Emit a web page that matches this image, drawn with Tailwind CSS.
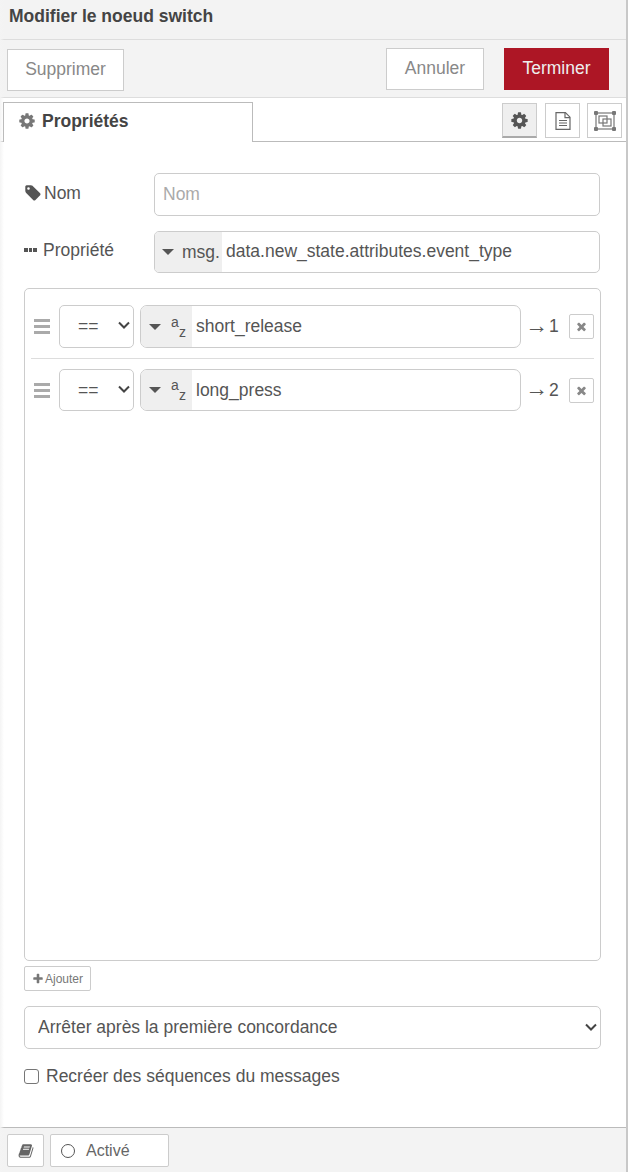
<!DOCTYPE html>
<html lang="fr">
<head>
  <meta charset="UTF-8" />
  <title>Modifier le noeud switch</title>
  <script src="https://cdn.jsdelivr.net/npm/@tailwindcss/browser@4"></script>
</head>
<body class="bg-white">
  <div class="relative h-[1172px] w-[628px] flex flex-col border-r-2 border-[#c8c8c8] font-['Liberation_Sans',Arial,sans-serif] text-[17.5px] text-[#555] overflow-hidden">
    <!-- left edge shadow -->
    <div class="absolute left-0 top-0 bottom-0 w-[4px] bg-gradient-to-r from-[#f4f4f4] to-transparent"></div>

    <!-- Title -->
    <header class="h-[40px] shrink-0 bg-[#f3f3f3] border-b border-[#ddd] pl-[9px] pt-[6px] font-bold text-[17.5px] leading-[20px] text-[#444]">Modifier le noeud switch</header>

    <!-- Actions -->
    <div class="h-[58px] shrink-0 bg-[#f3f3f3] border-b border-[#ddd] flex items-start justify-between pl-[7px] pr-[17px] pt-[8px]">
      <button class="mt-px h-[42px] w-[117px] pb-[2px] bg-white border border-[#ccc] text-[#888]">Supprimer</button>
      <div class="flex gap-[20px]">
        <button class="h-[42px] w-[98px] pb-[2px] bg-white border border-[#ccc] text-[#888]">Annuler</button>
        <button class="h-[42px] w-[105px] pb-[2px] bg-[#ad1625] text-[#eee]">Terminer</button>
      </div>
    </div>

    <!-- Tabs -->
    <div class="h-[44px] shrink-0 border-b border-[#bbb] flex items-end justify-between pl-[3px] pr-[4px]">
      <div class="-mb-px relative h-[40px] w-[250px] bg-white border-x border-t border-[#bbb] flex items-center pl-[14px] pb-[3px] gap-[6px] font-bold text-[#444]">
        <svg class="w-[18px] h-[18px] text-[#777]" viewBox="0 0 1792 1792" fill="currentColor"><path fill-rule="evenodd" d="M1152 896q0-106-75-181t-181-75-181 75-75 181 75 181 181 75 181-75 75-181zm512-109v222q0 12-8 23t-20 13l-185 28q-19 54-39 91 35 50 107 138 10 12 10 25t-9 23q-27 37-99 108t-94 71q-12 0-26-9l-138-108q-44 23-91 38-16 136-29 186-7 28-36 28h-222q-14 0-24.500-8.500t-11.500-21.500l-28-184q-49-16-90-37l-141 107q-10 9-25 9-14 0-25-11-126-114-165-168-7-10-7-23 0-12 8-23 15-21 51-66.500t54-70.500q-27-50-41-99l-183-27q-13-2-21-12.500t-8-23.500v-222q0-12 8-23t19-13l186-28q14-46 39-92-40-57-107-138-10-12-10-24 0-10 9-23 26-36 98.500-107.500t94.500-71.500q13 0 26 10l138 107q44-23 91-38 16-136 29-186 7-28 36-28h222q14 0 24.500 8.500t11.500 21.500l28 184q49 16 90 37l142-107q9-9 24-9 13 0 25 10 129 119 165 170 7 8 7 22 0 12-8 23-15 21-51 66.500t-54 70.500q26 50 41 98l183 28q13 2 21 12.500t8 23.500z"/></svg>
        Propriétés
      </div>
      <div class="flex mb-[3px]">
        <button class="w-[35px] h-[35px] bg-[#efefef] border border-[#ccc] border-b-2 border-b-[#aaa] flex items-center justify-center text-[#555]">
          <svg class="w-[19px] h-[19px]" viewBox="0 0 1792 1792" fill="currentColor"><path fill-rule="evenodd" d="M1152 896q0-106-75-181t-181-75-181 75-75 181 75 181 181 75 181-75 75-181zm512-109v222q0 12-8 23t-20 13l-185 28q-19 54-39 91 35 50 107 138 10 12 10 25t-9 23q-27 37-99 108t-94 71q-12 0-26-9l-138-108q-44 23-91 38-16 136-29 186-7 28-36 28h-222q-14 0-24.500-8.500t-11.500-21.500l-28-184q-49-16-90-37l-141 107q-10 9-25 9-14 0-25-11-126-114-165-168-7-10-7-23 0-12 8-23 15-21 51-66.500t54-70.500q-27-50-41-99l-183-27q-13-2-21-12.500t-8-23.500v-222q0-12 8-23t19-13l186-28q14-46 39-92-40-57-107-138-10-12-10-24 0-10 9-23 26-36 98.500-107.500t94.500-71.500q13 0 26 10l138 107q44-23 91-38 16-136 29-186 7-28 36-28h222q14 0 24.500 8.500t11.500 21.500l28 184q49 16 90 37l142-107q9-9 24-9 13 0 25 10 129 119 165 170 7 8 7 22 0 12-8 23-15 21-51 66.500t-54 70.500q26 50 41 98l183 28q13 2 21 12.500t8 23.500z"/></svg>
        </button>
        <button class="ml-[8px] w-[35px] h-[35px] bg-white border border-[#ccc] flex items-center justify-center text-[#666]">
          <svg class="w-[16px] h-[18px]" viewBox="0 0 16 18" fill="none" stroke="currentColor" stroke-width="1.2"><path d="M1 .6h9.400l4.600 4.600v12.200h-14z"/><path d="M10 .6v5h5" /><path d="M4 8.500h8M4 11h8M4 13.500h8" /></svg>
        </button>
        <button class="ml-[7px] w-[35px] h-[35px] bg-white border border-[#ccc] flex items-center justify-center text-[#777]">
          <svg class="w-[22px] h-[20px]" viewBox="0 0 22 20" fill="none" stroke="currentColor" stroke-width="1.200"><rect x="2" y="2" width="18" height="16"/><rect x="5" y="5" width="8" height="7"/><rect x="9" y="8" width="8" height="7"/><g fill="currentColor" stroke="none"><rect x="0" y="0" width="4" height="4" rx="1"/><rect x="18" y="0" width="4" height="4" rx="1"/><rect x="0" y="16" width="4" height="4" rx="1"/><rect x="18" y="16" width="4" height="4" rx="1"/></g></svg>
        </button>
      </div>
    </div>

    <!-- Form -->
    <main class="flex-1 pl-[24px] pr-[26px] pt-[31px] bg-white">
      <div class="flex items-start h-[43px]">
        <label class="w-[130px] flex items-center gap-[2px] pt-[10px] leading-[20px]">
          <svg class="w-[18px] h-[18px]" viewBox="0 0 1792 1792" fill="currentColor"><path fill-rule="evenodd" d="M576 448q0-53-37.500-90.500t-90.500-37.500-90.500 37.500-37.500 90.500 37.500 90.500 90.500 37.500 90.500-37.500 37.500-90.500zm1067 576q0 53-37 90l-491 492q-39 37-91 37-53 0-90-37l-715-716q-38-37-64.500-101t-26.500-117v-416q0-52 38-90t90-38h416q53 0 117 26.500t102 64.500l715 714q37 39 37 91z"/></svg>
          Nom
        </label>
        <input class="flex-1 min-w-0 h-[43px] border border-[#ccc] rounded-[5px] px-[8px] placeholder:text-[#aaa] outline-none" placeholder="Nom" />
      </div>
      <div class="flex items-start h-[42px] mt-[15px]">
        <label class="w-[130px] flex items-center gap-[4px] pt-[9px] leading-[20px]">
          <span class="flex gap-[1px] w-[15px]"><i class="w-[3.500px] h-[3.500px] bg-[#555]"></i><i class="w-[3.500px] h-[3.500px] bg-[#555]"></i><i class="w-[3.500px] h-[3.500px] bg-[#555]"></i></span>
          Propriété
        </label>
        <div class="flex-1 min-w-0 h-[42px] border border-[#ccc] rounded-[5px] flex overflow-hidden">
          <div class="w-[67px] bg-[#efefef] flex items-center pl-[7px] gap-[8px]">
            <span class="w-0 h-0 border-x-[6px] border-x-transparent border-t-[6px] border-t-[#555]"></span>
            <span>msg.</span>
          </div>
          <input class="flex-1 min-w-0 pl-[4px] pb-[2px] outline-none text-[#555]" value="data.new_state.attributes.event_type" />
        </div>
      </div>

      <!-- Rules -->
      <div class="mt-[15px] h-[673px] w-[577px] border border-[#ccc] rounded-[5px] pt-[16px] px-[6px]">
        <div class="flex items-center h-[43px]">
          <span class="w-[16px] ml-[3px] flex flex-col gap-[3px]"><i class="h-[3px] bg-[#aaa]"></i><i class="h-[3px] bg-[#aaa]"></i><i class="h-[3px] bg-[#aaa]"></i></span>
          <div class="relative ml-[9px] h-[43px] w-[75px]">
            <select class="appearance-none h-full w-full bg-white border border-[#ccc] rounded-[5px] pl-[18px] outline-none text-[#555]"><option>==</option></select>
            <svg class="absolute right-[4px] top-[16px] w-[12px] h-[9px] pointer-events-none text-[#444]" viewBox="0 0 12 9" fill="none" stroke="currentColor" stroke-width="2"><path d="M1 1.500l5 5 5-5"/></svg>
          </div>
          <div class="ml-[6px] w-[381px] h-[43px] border border-[#ccc] rounded-[7px] flex overflow-hidden">
            <div class="w-[51px] bg-[#efefef] flex items-center pl-[8px]">
              <span class="w-0 h-0 border-x-[6px] border-x-transparent border-t-[6px] border-t-[#555]"></span>
              <span class="relative w-[18px] h-[24px] ml-[10px] text-[14px] leading-[10px]"><span class="absolute left-0 top-[2px]">a</span><span class="absolute left-[8px] top-[12px]">z</span></span>
            </div>
            <input class="flex-1 min-w-0 pl-[4px] outline-none text-[#555]" value="short_release" />
          </div>
          <span class="w-[48px] pl-[4px] whitespace-nowrap flex items-center"><span class="text-[23px] leading-[20px] w-[24px] mb-[4px]">→</span><span>1</span></span>
          <button class="w-[25px] h-[25px] bg-white border border-[#ccc] rounded-[2px] flex items-center justify-center text-[#888]">
            <svg class="w-[13px] h-[13px]" viewBox="0 0 1792 1792" fill="currentColor"><path d="M1490 1322q0 40-28 68l-136 136q-28 28-68 28t-68-28l-294-294-294 294q-28 28-68 28t-68-28l-136-136q-28-28-28-68t28-68l294-294-294-294q-28-28-28-68t28-68l136-136q28-28 68-28t68 28l294 294 294-294q28-28 68-28t68 28l136 136q28 28 28 68t-28 68l-294 294 294 294q28 28 28 68z"/></svg>
          </button>
        </div>
        <div class="mt-[10px] mb-[10px] border-t border-[#ddd]"></div>
        <div class="flex items-center h-[42px]">
          <span class="w-[16px] ml-[3px] flex flex-col gap-[3px]"><i class="h-[3px] bg-[#aaa]"></i><i class="h-[3px] bg-[#aaa]"></i><i class="h-[3px] bg-[#aaa]"></i></span>
          <div class="relative ml-[9px] h-[42px] w-[75px]">
            <select class="appearance-none h-full w-full bg-white border border-[#ccc] rounded-[5px] pl-[18px] outline-none text-[#555]"><option>==</option></select>
            <svg class="absolute right-[4px] top-[16px] w-[12px] h-[9px] pointer-events-none text-[#444]" viewBox="0 0 12 9" fill="none" stroke="currentColor" stroke-width="2"><path d="M1 1.500l5 5 5-5"/></svg>
          </div>
          <div class="ml-[6px] w-[381px] h-[42px] border border-[#ccc] rounded-[7px] flex overflow-hidden">
            <div class="w-[51px] bg-[#efefef] flex items-center pl-[8px]">
              <span class="w-0 h-0 border-x-[6px] border-x-transparent border-t-[6px] border-t-[#555]"></span>
              <span class="relative w-[18px] h-[24px] ml-[10px] text-[14px] leading-[10px]"><span class="absolute left-0 top-[2px]">a</span><span class="absolute left-[8px] top-[12px]">z</span></span>
            </div>
            <input class="flex-1 min-w-0 pl-[4px] outline-none text-[#555]" value="long_press" />
          </div>
          <span class="w-[48px] pl-[4px] whitespace-nowrap flex items-center"><span class="text-[23px] leading-[20px] w-[24px] mb-[4px]">→</span><span>2</span></span>
          <button class="w-[25px] h-[25px] bg-white border border-[#ccc] rounded-[2px] flex items-center justify-center text-[#888]">
            <svg class="w-[13px] h-[13px]" viewBox="0 0 1792 1792" fill="currentColor"><path d="M1490 1322q0 40-28 68l-136 136q-28 28-68 28t-68-28l-294-294-294 294q-28 28-68 28t-68-28l-136-136q-28-28-28-68t28-68l294-294-294-294q-28-28-28-68t28-68l136-136q28-28 68-28t68 28l294 294 294-294q28-28 68-28t68 28l136 136q28 28 28 68t-28 68l-294 294 294 294q28 28 28 68z"/></svg>
          </button>
        </div>
      </div>

      <button class="mt-[5px] h-[25px] w-[67px] bg-white border border-[#ccc] rounded-[2px] flex items-center justify-center gap-[1px] text-[12px] text-[#777]">
        <svg class="w-[12px] h-[12px]" viewBox="0 0 1792 1792" fill="currentColor"><path d="M1600 736v192q0 40-28 68t-68 28h-416v416q0 40-28 68t-68 28h-192q-40 0-68-28t-28-68v-416h-416q-40 0-68-28t-28-68v-192q0-40 28-68t68-28h416v-416q0-40 28-68t68-28h192q40 0 68 28t28 68v416h416q40 0 68 28t28 68z"/></svg>
        Ajouter
      </button>

      <div class="relative mt-[15px] h-[43px] w-[577px]">
        <select class="appearance-none block h-full w-full bg-white border border-[#ccc] rounded-[5px] pl-[13px] outline-none text-[#555]"><option>Arrêter après la première concordance</option></select>
        <svg class="absolute right-[4px] top-[17px] w-[12px] h-[9px] pointer-events-none text-[#444]" viewBox="0 0 12 9" fill="none" stroke="currentColor" stroke-width="2"><path d="M1 1.500l5 5 5-5"/></svg>
      </div>

      <label class="mt-[17px] flex items-center gap-[7px] leading-[20px]">
        <input type="checkbox" class="appearance-none w-[15px] h-[15px] m-0 bg-white border border-[#767676] rounded-[3px]" />
        Recréer des séquences du messages
      </label>
    </main>

    <!-- Footer -->
    <footer class="h-[45px] shrink-0 bg-[#f3f3f3] border-t border-[#bbb] flex items-start gap-[6px] pl-[7px] pt-[6px] text-[16px]">
      <button class="w-[37px] h-[33px] bg-white border border-[#ccc] rounded-[2px] flex items-center justify-center text-[#666]">
        <svg class="w-[16px] h-[16px]" viewBox="0 0 1792 1792" fill="currentColor"><path fill-rule="evenodd" d="M1703 478q40 57 18 129l-275 906q-19 64-76.500 107.500t-122.500 43.500h-923q-77 0-148.500-53.500t-99.500-131.500q-24-67-2-127 0-4 3-27t4-37q1-8-3-21.500t-3-19.500q2-11 8-21t16.500-23.500 16.500-23.500q23-38 45-91.500t30-91.500q3-10 .5-30t-.5-28q3-11 17-28t17-23q21-36 42-92t25-90q1-9-2.500-32t.5-28q4-13 22-30.500t22-22.500q19-26 42.500-84.500t27.500-96.500q1-8-3-25.500t-2-26.500q2-8 9-18t18-23 17-21q8-12 16.500-30.500t15-35 16-36 19.500-32 26.500-23.500 36-11.500 47.500 5.500l-1 3q38-9 51-9h761q74 0 114 56t18 130l-274 906q-36 119-71.500 153.500t-128.500 34.500h-869q-27 0-38 15-11 16-1 43 24 70 144 70h923q29 0 56-15.500t35-41.500l300-987q7-22 5-57 38 15 59 43zm-1064 2q-4 13 2 22.500t20 9.500h608q13 0 25.500-9.500t16.500-22.500l21-64q4-13-2-22.500t-20-9.500h-608q-13 0-25.500 9.500t-16.500 22.500zm-83 256q-4 13 2 22.500t20 9.500h608q13 0 25.500-9.500t16.500-22.500l21-64q4-13-2-22.500t-20-9.500h-608q-13 0-25.500 9.500t-16.500 22.500z"/></svg>
      </button>
      <button class="w-[119px] h-[33px] bg-white border border-[#ccc] rounded-[2px] flex items-center pl-[10px] gap-[11px] text-[#666]">
        <span class="w-[14px] h-[14px] rounded-full border border-[#555]"></span>
        Activé
      </button>
    </footer>
  </div>
</body>
</html>
